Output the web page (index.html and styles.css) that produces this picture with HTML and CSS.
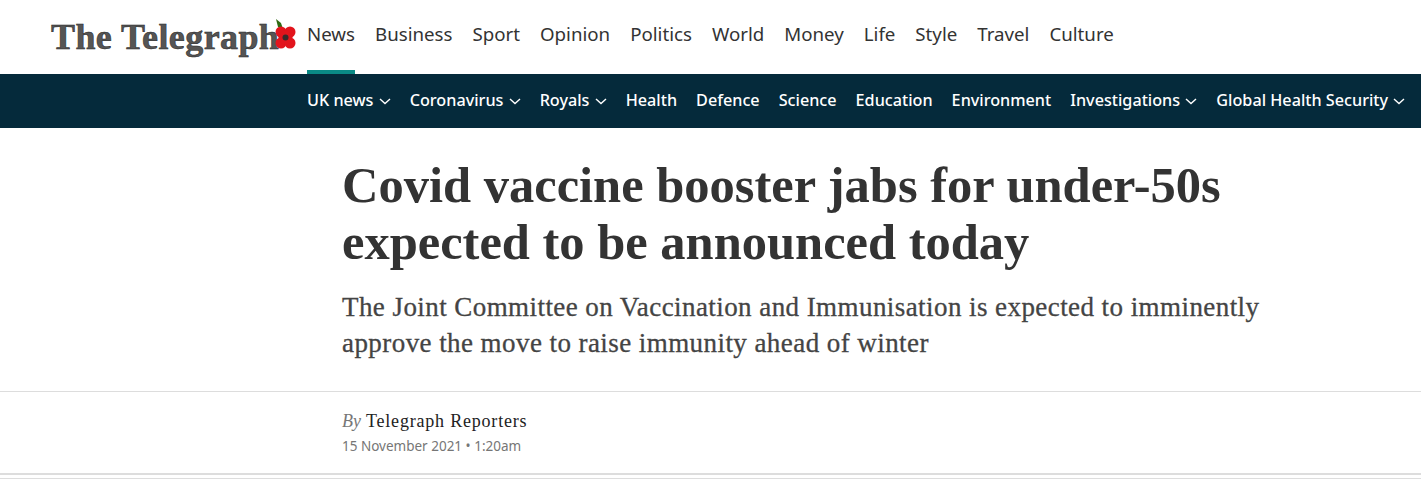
FILE: index.html
```html
<!DOCTYPE html>
<html lang="en-GB">
<head>
  <meta charset="UTF-8" />
  <meta name="viewport" content="width=device-width, initial-scale=1.0"/>
  <title>Covid vaccine booster jabs for under-50s expected to be announced today</title>
  <link rel="stylesheet" href="styles.css">
</head>
<body>
<header class="top-bar">
  <a class="logo" href="#">
    <span class="logo-text">The Telegraph</span>
    <svg class="poppy" width="21" height="32" viewBox="0 0 21 32">
      <path d="M1 0 L6 4 L8 10 L3 8 Z" fill="#2f6a12"/>
      <circle cx="6" cy="13" r="5.500" fill="#e2141c"/>
      <circle cx="15" cy="13" r="5.500" fill="#e2141c"/>
      <circle cx="6" cy="24" r="5.500" fill="#e2141c"/>
      <circle cx="15" cy="24" r="5.500" fill="#e2141c"/>
      <circle cx="10.500" cy="18.500" r="7" fill="#e2141c"/>
      <circle cx="10.500" cy="18.500" r="3" fill="#3a2a2a"/>
    </svg>
  </a>
  <nav class="main-nav">
    <a href="#" class="active">News</a>
    <a href="#">Business</a>
    <a href="#">Sport</a>
    <a href="#">Opinion</a>
    <a href="#">Politics</a>
    <a href="#">World</a>
    <a href="#">Money</a>
    <a href="#">Life</a>
    <a href="#">Style</a>
    <a href="#">Travel</a>
    <a href="#">Culture</a>
  </nav>
</header>

<nav class="sub-nav">
  <a href="#">UK news <svg class="chev" width="12" height="7" viewBox="0 0 12 7"><path d="M1 1 L6 5.500 L11 1"/></svg></a>
  <a href="#">Coronavirus <svg class="chev" width="12" height="7" viewBox="0 0 12 7"><path d="M1 1 L6 5.500 L11 1"/></svg></a>
  <a href="#">Royals <svg class="chev" width="12" height="7" viewBox="0 0 12 7"><path d="M1 1 L6 5.500 L11 1"/></svg></a>
  <a href="#">Health</a>
  <a href="#">Defence</a>
  <a href="#">Science</a>
  <a href="#">Education</a>
  <a href="#">Environment</a>
  <a href="#">Investigations <svg class="chev" width="12" height="7" viewBox="0 0 12 7"><path d="M1 1 L6 5.500 L11 1"/></svg></a>
  <a href="#">Global Health Security <svg class="chev" width="12" height="7" viewBox="0 0 12 7"><path d="M1 1 L6 5.500 L11 1"/></svg></a>
</nav>

<section class="headline">
  <h1>Covid vaccine booster jabs for under-50s expected to be announced today</h1>
  <p class="standfirst">The Joint Committee on Vaccination and Immunisation is expected to imminently approve the move to raise immunity ahead of winter</p>
</section>

<section class="byline">
  <div class="author"><em>By</em> Telegraph Reporters</div>
  <div class="date">15 November 2021 &bull; 1:20am</div>
</section>
<div class="next-rule"></div>
</body>
</html>
```

FILE: styles.css
```css
body {
  font-family: "Noto Sans", Arial, sans-serif;
  margin: 0;
  background-color: #fff;
  color: #333;
  overflow: hidden;
}
a {
  color: inherit;
  text-decoration: none;
}
.top-bar {
  display: flex;
  height: 74px;
  padding-left: 51px;
  box-sizing: border-box;
}
.logo {
  display: flex;
  align-items: center;
  width: 256px;
  flex-shrink: 0;
}
.logo-text {
  font-family: "Liberation Serif", serif;
  font-weight: bold;
  font-size: 36px;
  letter-spacing: 0.4px;
  color: #555;
  -webkit-text-stroke: 0.5px #222;
  white-space: nowrap;
  width: 224px;
}
.poppy {
  margin-top: -5px;
}
.main-nav {
  display: flex;
  gap: 20px;
}
.main-nav a {
  font-size: 18.700px;
  line-height: 68px;
  height: 74px;
  box-sizing: border-box;
  color: #333;
}
.main-nav a.active {
  border-bottom: 4px solid #0a8a86;
}
.sub-nav {
  display: flex;
  gap: 19px;
  height: 54px;
  padding-left: 307px;
  background-color: #052a3b;
  align-items: center;
}
.sub-nav a {
  color: #fff;
  font-size: 16.200px;
  font-weight: 500;
  white-space: nowrap;
  line-height: 50px;
  margin-top: -2px;
}
.chev {
  margin-left: 1px;
  vertical-align: 1px;
}
.chev path {
  fill: none;
  stroke: #fff;
  stroke-width: 1.400;
}
.headline {
  padding: 29px 150px 30px 342px;
  border-bottom: 1px solid #ddd;
}
h1 {
  font-family: "Liberation Serif", serif;
  font-weight: bold;
  font-size: 50.500px;
  line-height: 57px;
  margin: 0 0 18px;
  color: #333;
}
.standfirst {
  font-family: "Liberation Serif", serif;
  font-size: 27px;
  letter-spacing: 0.43px;
  -webkit-text-stroke: 0.3px #444;
  line-height: 36px;
  margin: 0;
  color: #444;
}
.byline {
  padding: 17px 0 14px 342px;
  border-bottom: 2px solid #ddd;
}
.author {
  font-family: "Liberation Serif", serif;
  font-size: 18px;
  letter-spacing: 0.8px;
  line-height: 24px;
  color: #222;
}
.author em {
  color: #777;
  letter-spacing: 0;
}
.date {
  font-size: 13.500px;
  line-height: 26px;
  color: #767676;
}
.next-rule {
  margin-top: 3px;
  border-top: 1px solid #ddd;
}
```
